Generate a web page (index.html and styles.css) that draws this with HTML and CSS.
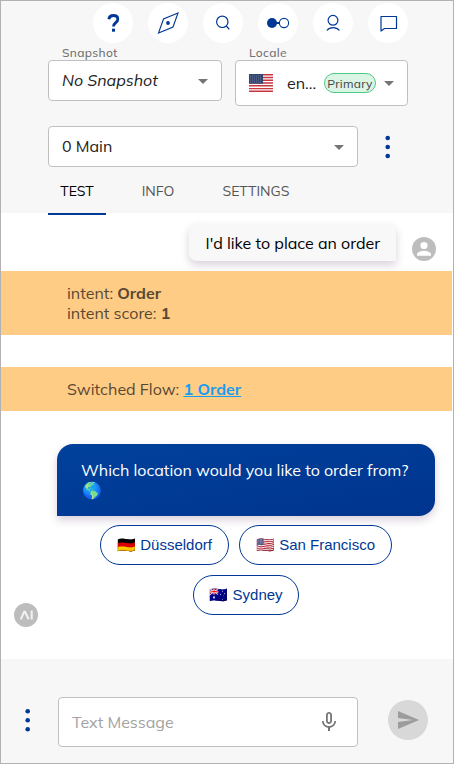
FILE: index.html
```html
<!DOCTYPE html>
<html lang="en">
<head>
<meta charset="utf-8">
<title>Interaction Panel</title>
<link rel="stylesheet" href="styles.css">
</head>
<body>
<div class="panel">
  <header class="header">
    <nav class="toolbar">
      <button class="round"><svg width="40" height="40" viewBox="0 0 40 40"><path d="M15.800 16.200c.4-2.600 2.100-3.700 4.500-3.700 2.600 0 4.500 1.400 4.500 3.700 0 3.400-4.300 3.400-4.300 7.200" fill="none" stroke="#003896" stroke-width="2.800"/><rect x="19" y="25.700" width="3" height="3" fill="#003896"/></svg></button>
      <button class="round"><svg width="40" height="40" viewBox="0 0 40 40" fill="none" stroke="#003896" stroke-width="1.1"><path d="M30 10 25 24 10.500 30 15.500 16Z"/><circle cx="20" cy="20" r="1.900" fill="#003896" stroke="none"/></svg></button>
      <button class="round"><svg width="40" height="40" viewBox="0 0 40 40" fill="none" stroke="#003896" stroke-width="1.2"><circle cx="19.300" cy="18.800" r="5.700"/><path d="m23.300 23 3 3.400"/></svg></button>
      <button class="round"><svg width="40" height="40" viewBox="0 0 40 40" fill="none" stroke="#003896"><circle cx="14" cy="20" r="5" fill="#003896" stroke="none"/><path d="M18 20h4" stroke-width="2"/><circle cx="26" cy="20" r="4.600" stroke-width="1.1"/></svg></button>
      <button class="round"><svg width="40" height="40" viewBox="0 0 40 40" fill="none" stroke="#003896" stroke-width="1.2"><circle cx="20" cy="17.300" r="4.900"/><path d="M13.800 27.500c3-3.900 9.600-3.900 12.600 0"/></svg></button>
      <button class="round"><svg width="40" height="40" viewBox="0 0 40 40" fill="none" stroke="#003896" stroke-width="1.2" stroke-linejoin="round"><path d="M13 13.500h15.500v12H16.500L13 28Z"/></svg></button>
    </nav>
    <div class="selectors">
      <div class="field snapshot">
        <span class="label">Snapshot</span>
        <div class="select"><em class="value">No Snapshot</em><i class="caret"></i></div>
      </div>
      <div class="field locale">
        <span class="label">Locale</span>
        <div class="select">
          <svg class="flag" width="24" height="18" viewBox="0 0 24 18"><rect width="24" height="18" fill="#fff"/><path d="M0 .7h24M0 3.500h24M0 6.300h24M0 9h24M0 11.800h24M0 14.600h24M0 17.300h24" stroke="#c8343f" stroke-width="1.4"/><rect width="14" height="9.700" fill="#34466f"/><path d="M1 2h12M1 4h12M1 6h12M1 8h12" stroke="#8d9ab5" stroke-width=".5" stroke-dasharray="1 1"/></svg>
          <span class="lang">en...</span><span class="chip">Primary</span><i class="caret"></i>
        </div>
      </div>
    </div>
    <div class="flow">
      <div class="select"><span class="value">0 Main</span><i class="caret"></i></div>
      <svg width="6" height="24" viewBox="0 0 6 24" fill="#003896"><circle cx="2.700" cy="3" r="2.300"/><circle cx="2.700" cy="12" r="2.300"/><circle cx="2.700" cy="21" r="2.300"/></svg>
    </div>
    <div class="tabs"><span class="tab active">TEST</span><span class="tab info">INFO</span><span class="tab settings">SETTINGS</span></div>
  </header>
  <main class="chat">
    <div class="user-row">
      <div class="user-bubble"><span>I'd like to place an order</span></div>
      <svg width="24" height="24" viewBox="0 0 24 24"><circle cx="12" cy="12" r="12" fill="#bdbdbd"/><circle cx="12" cy="8.500" r="3.600" fill="#fff"/><path d="M5 18.800v-1.500c0-2.300 4.600-3.600 7-3.600s7 1.300 7 3.600v1.500Z" fill="#fff"/></svg>
    </div>
    <div class="note intent"><div class="line">intent: <b>Order</b></div><div class="line">intent score: <b>1</b></div></div>
    <div class="note switched"><div class="line">Switched Flow: <a href="#">1 Order</a></div></div>
    <div class="bot-bubble"><div class="line">Which location would you like to order from?</div><div class="globe">🌎</div></div>
    <div class="replies">
      <button class="reply dus">🇩🇪 Düsseldorf</button>
      <button class="reply sf">🇺🇸 San Francisco</button>
      <button class="reply syd">🇦🇺 Sydney</button>
    </div>
    <svg class="ai" width="24" height="24" viewBox="0 0 24 24"><circle cx="12" cy="12" r="12" fill="#bdbdbd"/><path d="m6.800 16.300 3.400-7.600h.8l3.700 7.600M17.700 7.500v9" fill="none" stroke="#f3f3f3" stroke-width="2"/></svg>
  </main>
  <footer class="composer">
    <svg class="more" width="6" height="24" viewBox="0 0 6 24" fill="#003896"><circle cx="2.700" cy="3.300" r="2.300"/><circle cx="2.700" cy="12.300" r="2.300"/><circle cx="2.700" cy="21.300" r="2.300"/></svg>
    <div class="input"><span class="placeholder">Text Message</span>
      <svg width="24" height="24" viewBox="0 0 24 24" fill="#757575"><path d="M12 14c1.660 0 2.990-1.340 2.990-3L15 5c0-1.660-1.340-3-3-3S9 3.340 9 5v6c0 1.660 1.340 3 3 3zm-1.200-9.100c0-.66.54-1.200 1.200-1.200s1.200.54 1.200 1.200l-.01 6.200c0 .66-.53 1.200-1.190 1.200s-1.200-.54-1.200-1.200V4.900zm6.500 6.100c0 3-2.540 5.100-5.300 5.100S6.700 14 6.700 11H5c0 3.410 2.720 6.230 6 6.720V21h2v-3.280c3.280-.48 6-3.300 6-6.720h-1.700z"/></svg>
    </div>
    <button class="send"><svg width="24" height="24" viewBox="0 0 24 24" fill="#9c9c9c"><path d="M2 21 23 12 2 3v7l15 2-15 2Z"/></svg></button>
  </footer>
</div>
</body>
</html>
```
FILE: styles.css
```css
* { box-sizing: border-box; }
body { margin: 0; font: 16px/20px Mulish, Muli, Nunito, Lato, sans-serif; color: #212121; }
button { font: inherit; border: 0; padding: 0; }
svg { display: block; flex: none; }
span, .line { white-space: nowrap; }
.panel { width: 454px; height: 764px; border: 1px solid #b3b1b3; background: #fff; display: flex; flex-direction: column; overflow: hidden; }
.header { height: 212px; background: #f7f7f7; flex: none; }
.toolbar { display: flex; gap: 15px; padding: 2px 0 0 92px; }
.round { width: 40px; height: 40px; border-radius: 50%; background: #fff; flex: none; }
.selectors { display: flex; gap: 13px; padding: 3px 0 0 47px; height: 83px; }
.label { display: block; height: 14px; padding-left: 14px; font-size: 12px; line-height: 13px; letter-spacing: .3px; color: #737373; font-weight: 500; }
.select { display: flex; align-items: center; background: #fff; border: 1px solid #c0c0c0; border-radius: 4px; height: 41px; padding: 0 13px; }
.value { padding-bottom: 2px; }
.snapshot { width: 174px; }
.locale { width: 173px; }
.locale .select { height: 46px; }
.caret { border: 5px solid transparent; border-top-color: #757575; border-bottom: 0; margin-left: auto; margin-top: 1px; }
.locale .caret { margin-top: 0; }
.lang { width: 30px; margin-left: 14px; }
.chip { width: 52px; height: 20px; margin-left: 7px; border: 1px solid #4acb84; border-radius: 10px; background: #daf4e6; font-size: 12px; line-height: 20px; text-align: center; color: #444; letter-spacing: .25px; }
.flow { display: flex; align-items: center; gap: 27px; padding-left: 47px; height: 41px; }
.flow > svg { margin-top: 1px; }
.flow .select { width: 310px; }
.tabs { display: flex; height: 49px; margin-left: 47px; font-size: 14px; line-height: 48px; color: #555; }
.tab { text-align: center; }
.active { width: 58px; height: 48px; border-bottom: 2px solid #003896; color: #000; }
.info { margin-left: 35px; width: 34px; }
.settings { margin-left: 46px; width: 70px; }
.chat { height: 446px; flex: none; display: flex; flex-direction: column; }
.user-row { height: 58px; padding: 11px 16px 0 188px; display: flex; gap: 16px; }
.user-row svg { margin-top: 13px; }
.user-bubble { width: 207px; height: 37px; border-radius: 8px 8px 1px 8px; background: #f8f8f8; box-shadow: 0 4px 8px rgba(80, 40, 90, .22); padding: 9px 16.5px; color: #000; }
.note { background: #ffcc86; color: #584832; padding: 12px 66px; margin-right: 1px; }
.intent { height: 64px; }
.switched { height: 44px; margin-top: 32px; }
.note a { color: #1a9cf0; font-weight: bold; }
.bot-bubble { width: 378px; height: 72px; margin: 33px 0 0 56px; border-radius: 16px 16px 16px 0; background: linear-gradient(170deg, #00419c, #00348e); color: #fff; padding: 16px 24px; box-shadow: 0 4px 8px rgba(80, 40, 90, .22); }
.globe { padding-left: .5px; }
.replies { display: flex; flex-wrap: wrap; justify-content: center; gap: 10px; width: 378px; margin: 9px 0 0 56px; }
.reply { height: 40px; border: 1px solid #003896; border-radius: 20px; background: #fff; color: #003896; font: 15px "Liberation Sans", sans-serif; white-space: nowrap; }
.dus { width: 129px; }
.sf { width: 153px; }
.syd { width: 106px; }
.ai { margin: -12px 0 0 13px; }
.composer { height: 104px; flex: none; background: #f7f7f7; display: flex; align-items: flex-start; padding-left: 24px; }
.more { margin-top: 49px; }
.input { width: 300px; height: 50px; margin: 38px 0 0 27px; border: 1px solid #c0c0c0; border-radius: 4px; background: #fff; display: flex; align-items: center; justify-content: space-between; padding: 0 16px 0 13px; }
.placeholder { color: #a2a2a2; }
.send { width: 40px; height: 40px; margin: 41px 0 0 30px; border-radius: 50%; background: #d8d8d8; display: flex; align-items: center; justify-content: center; }
```
